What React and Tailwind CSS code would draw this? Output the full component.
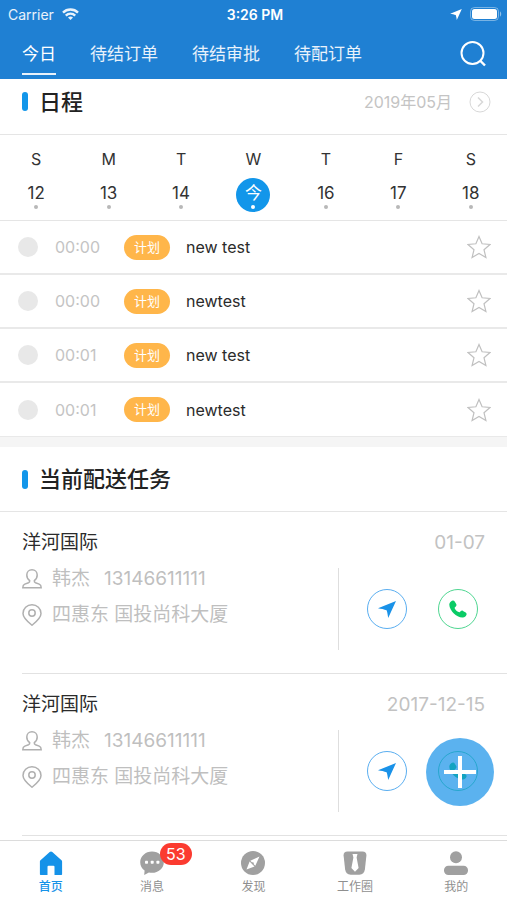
import { useState } from 'react';

const tabs = ['今日', '待结订单', '待结审批', '待配订单'];

const week = [
  { label: 'S', date: '12' },
  { label: 'M', date: '13' },
  { label: 'T', date: '14' },
  { label: 'W', date: '今', today: true },
  { label: 'T', date: '16' },
  { label: 'F', date: '17' },
  { label: 'S', date: '18' },
];

const schedules = [
  { id: 1, time: '00:00', tag: '计划', title: 'new test' },
  { id: 2, time: '00:00', tag: '计划', title: 'newtest' },
  { id: 3, time: '00:01', tag: '计划', title: 'new test' },
  { id: 4, time: '00:01', tag: '计划', title: 'newtest' },
];

const tasks = [
  { id: 1, company: '洋河国际', date: '01-07', contact: '韩杰', phone: '13146611111', address: '四惠东 国投尚科大厦' },
  { id: 2, company: '洋河国际', date: '2017-12-15', contact: '韩杰', phone: '13146611111', address: '四惠东 国投尚科大厦' },
];

const WifiIcon = () => (
  <svg className="h-3 w-[17px]" viewBox="0 0 17 12" fill="none" stroke="currentColor" strokeWidth="2.4">
    <path d="M1 4.6a10.6 10.6 0 0 1 15 0" />
    <path d="M3.8 7.6a6.6 6.6 0 0 1 9.4 0" />
    <path d="M8.5 12 6 9.6a3.6 3.6 0 0 1 5 0z" fill="currentColor" stroke="none" />
  </svg>
);

const BatteryIcon = () => (
  <svg className="h-[14px] w-8" viewBox="0 0 32 14" fill="none">
    <rect x="0.5" y="0.5" width="28" height="13" rx="4" stroke="white" strokeOpacity="0.4" />
    <rect x="2" y="2" width="25" height="10" rx="2.5" fill="white" />
    <path d="M30 4.5c1.6.6 1.6 4.4 0 5z" fill="white" fillOpacity="0.5" />
  </svg>
);

const ArrowIcon = ({ className }) => (
  <svg className={className} viewBox="0 0 18 17" fill="currentColor">
    <path d="M18 0 0 7.2c3 .5 6.300 1 8.600 2.100.9 2.200 1.100 4.900 1.600 7.700z" />
  </svg>
);

const PhoneIcon = () => (
  <svg className="size-[18px]" viewBox="0 0 18 18" fill="currentColor">
    <path d="M.6 3.200C1.200 1.700 2.600.5 4 .4c.7 0 1.300.4 1.700 1l1.500 2.500c.5.900.3 1.800-.4 2.500l-.8.8c-.4.400-.4.8-.2 1.200.9 1.600 2.200 2.900 3.900 3.700.5.200.9.100 1.200-.2l.7-.7c.7-.6 1.600-.8 2.400-.3l2.700 1.600c.9.6 1.100 1.500.7 2.400-.6 1.400-1.900 2.500-3.500 2.600-3.200.2-6.700-1.600-9.300-4.200C2.100 10.800-.6 6.300.6 3.200z" />
  </svg>
);

const SearchIcon = () => (
  <svg className="size-7" viewBox="0 0 28 28" fill="none" stroke="currentColor" strokeWidth="2">
    <circle cx="13.500" cy="13" r="11" />
    <path d="m21 20.500 5 5" strokeWidth="2.400" />
  </svg>
);

const ChevronCircleIcon = () => (
  <svg className="size-[22px]" viewBox="0 0 22 22" fill="none" stroke="currentColor">
    <circle cx="11" cy="11" r="10" />
    <path d="m9 6.500 4.500 4.500L9 15.500" strokeWidth="1.500" />
  </svg>
);

const StarIcon = () => (
  <svg className="size-6" viewBox="0 0 24 24" fill="none" stroke="currentColor" strokeWidth="1.200">
    <path d="m12 1.500 3.100 7.300 7.900.7-6 5.200 1.900 7.800L12 18.400l-6.900 4.100L7 14.700 1 9.500l7.900-.7z" />
  </svg>
);

const PersonIcon = () => (
  <svg className="h-5 w-5 shrink-0" viewBox="0 0 20 20" fill="none" stroke="currentColor" strokeWidth="1.500">
    <path d="M7.700 11.700C5.900 10.400 4.800 8.300 4.800 6c0-3 2.200-5.200 5.200-5.200S15.200 3 15.200 6c0 2.300-1.100 4.400-2.900 5.700-.2 1.100.2 1.700 1.200 2.100l3.700 1.300c1.300.5 2 1.500 2 3.600H.8c0-2.100.7-3.100 2-3.600l3.700-1.300c1-.4 1.400-1 1.200-2.100z" />
  </svg>
);

const PinIcon = () => (
  <svg className="h-[22px] w-5 shrink-0" viewBox="0 0 20 22" fill="none" stroke="currentColor" strokeWidth="1.500">
    <path d="M10 21.200C6.500 18.300 1 14.200 1 9.500 1 4.500 5 .8 10 .8s9 3.700 9 8.700c0 4.700-5.500 8.800-9 11.700z" />
    <circle cx="10" cy="9" r="3.200" />
  </svg>
);

const HomeIcon = () => (
  <svg className="size-6" viewBox="0 0 24 24" fill="currentColor">
    <path d="M12 .5c.5 0 .9.200 1.300.5l9.200 8.200c.4.400.6.800.6 1.300V23c0 .6-.4 1-1 1h-6.600v-8.200a1 1 0 0 0-1-1h-5a1 1 0 0 0-1 1V24H1.900c-.6 0-1-.4-1-1V10.500c0-.5.200-.9.600-1.300L10.700 1c.4-.3.800-.5 1.300-.5z" />
  </svg>
);

const ChatIcon = () => (
  <svg className="size-6" viewBox="0 0 24 24" fill="currentColor">
    <path d="M12 .5C5.500.500.200 5.300.200 11.200c0 3.500 1.700 6.300 4.400 8.300L4.200 24l4.700-2.600c1 .3 2 .4 3.100.4 6.500 0 11.800-4.700 11.800-10.600S18.500.5 12 .5z" />
    <g fill="white">
      <rect x="5" y="9.700" width="3" height="3" rx="0.700" />
      <rect x="10.700" y="9.700" width="3" height="3" rx="0.700" />
      <rect x="16.400" y="9.700" width="3" height="3" rx="0.700" />
    </g>
  </svg>
);

const CompassIcon = () => (
  <svg className="size-6" viewBox="0 0 24 24">
    <circle cx="12" cy="12" r="12" fill="currentColor" />
    <path d="M18.500 5.500 9.300 9.800l5 5zM8.600 10.500 5.500 18.500l8-3.100z" fill="white" />
    <circle cx="11.800" cy="12.300" r="1" fill="currentColor" />
  </svg>
);

const TieIcon = () => (
  <svg className="size-6" viewBox="0 0 24 24">
    <path d="M4.500.5h15C22 .5 23.600 2 23.400 4.500l-1.500 13.800c-.5 3.600-2.200 5.400-5.600 5.400H7.700c-3.400 0-5.100-1.800-5.600-5.400L.6 4.500C.4 2 2 .5 4.500.5z" fill="currentColor" />
    <path d="M9.500 3h5l-.9 3.500 2 10.500L12 20.800 8.400 17l2-10.500z" fill="white" />
  </svg>
);

const MineIcon = () => (
  <svg className="size-6" viewBox="0 0 24 24" fill="currentColor">
    <circle cx="12" cy="6.300" r="6" />
    <rect x="0" y="14.700" width="24" height="9.300" rx="4.400" />
  </svg>
);

const navItems = [
  { label: '首页', icon: HomeIcon },
  { label: '消息', icon: ChatIcon, badge: 53 },
  { label: '发现', icon: CompassIcon },
  { label: '工作圈', icon: TieIcon },
  { label: '我的', icon: MineIcon },
];

const SectionTitle = ({ children }) => (
  <h2 className="flex items-center gap-[11px] text-[22px] leading-8 font-medium text-[#222]">
    <span className="h-[19px] w-[6px] rounded-full bg-[#1296ea]" />
    {children}
  </h2>
);

const TaskCard = ({ task }) => (
  <li className="ml-[22px] border-b border-[#e2e2e2] pt-[17px] pr-[22px] pb-[23px]">
    <div className="flex items-center justify-between text-[19px] leading-7">
      <h3 className="text-[#2b2b2b]">{task.company}</h3>
      <time className="text-[#c2c2c2]">{task.date}</time>
    </div>
    <div className="mt-2 flex items-start justify-between text-[#b0b0b0]">
      <div className="flex flex-col gap-2 text-[19px] leading-7">
        <p className="flex items-center gap-[10px]">
          <PersonIcon />
          <span className="text-[#bfbfbf]">{task.contact}</span>
          <span className="ml-1 text-[#bfbfbf]">{task.phone}</span>
        </p>
        <p className="flex items-center gap-[10px]">
          <PinIcon />
          <span className="text-[#bfbfbf]">{task.address}</span>
        </p>
      </div>
      <div className="mt-[3px] flex h-[82px] w-[147px] shrink-0 items-center gap-[31px] border-l border-[#dedede] pl-7">
        <button aria-label="导航" className="flex size-10 items-center justify-center rounded-full border border-[#5aaef0] text-[#1a92e8]">
          <ArrowIcon className="h-[17px] w-[18px]" />
        </button>
        <button aria-label="电话" className="flex size-10 items-center justify-center rounded-full border border-[#4fd691] text-[#0acb66]">
          <PhoneIcon />
        </button>
      </div>
    </div>
  </li>
);

const App = () => {
  const [activeTab, setActiveTab] = useState('今日');

  return (
    <div className="min-h-screen bg-white pb-[60px] font-[Inter,'Noto_Sans_CJK_SC',sans-serif]">
      <header className="sticky top-0 z-10 bg-[#1f80d3] text-white">
        {/* Status bar */}
        <div className="grid h-7 grid-cols-3 items-center pr-[5px] pl-2 text-[14px]">
          <div className="flex items-center gap-2 text-white/90">
            Carrier
            <WifiIcon />
          </div>
          <span className="text-center font-semibold">3:26 PM</span>
          <div className="flex items-center justify-end gap-2">
            <ArrowIcon className="h-[11px] w-3" />
            <BatteryIcon />
          </div>
        </div>

        {/* Tabs */}
        <div className="flex h-[51px] items-center justify-between pr-5 pl-[22px]">
          <nav className="flex gap-[34px] self-stretch">
            {tabs.map((tab) => (
              <button
                key={tab}
                onClick={() => setActiveTab(tab)}
                className={`mb-1 flex items-center border-b-2 pt-2 text-[17px] whitespace-nowrap ${
                  tab === activeTab ? 'border-white/90 text-white' : 'border-transparent text-white/90'
                }`}
              >
                {tab}
              </button>
            ))}
          </nav>
          <button aria-label="搜索">
            <SearchIcon />
          </button>
        </div>
      </header>

      <main>
        {/* Schedule */}
        <section>
          <div className="flex h-14 items-center justify-between border-b border-[#e5e5e5] pr-4 pb-[10px] pl-[22px]">
            <SectionTitle>日程</SectionTitle>
            <div className="flex items-center gap-[17px] text-[16px] text-[#c4c4c4]">
              <span>2019年05月</span>
              <button aria-label="查看日历" className="text-[#d8d8d8]">
                <ChevronCircleIcon />
              </button>
            </div>
          </div>

          <div className="grid grid-cols-7 border-b border-[#e5e5e5] pt-3 pb-2 text-[17px] text-[#333]">
            {week.map((day) => (
              <div key={day.date} className="flex flex-col items-center gap-[7px]">
                <span className="text-[16px] leading-6">{day.label}</span>
                <button
                  className={`flex size-[34px] flex-col items-center rounded-full pt-[3px] leading-6 ${
                    day.today ? 'bg-[#1296ea] text-white' : ''
                  }`}
                >
                  {day.date}
                  <span className={`size-1 rounded-full ${day.today ? 'bg-white' : 'bg-[#b8b8b8]'}`} />
                </button>
              </div>
            ))}
          </div>

          <ul>
            {schedules.map((item) => (
              <li
                key={item.id}
                className="flex h-[54px] items-center border-b-2 border-[#e9e9e9] pr-4 pl-[18px] last:border-b"
              >
                <input
                  type="checkbox"
                  id={`schedule-${item.id}`}
                  className="size-5 appearance-none rounded-full bg-[#e8e8e8] checked:bg-[#1296ea]"
                />
                <label htmlFor={`schedule-${item.id}`} className="flex flex-1 items-center text-[16px]">
                  <span className="w-[86px] pl-[17px] text-[#c4c4c4]">{item.time}</span>
                  <span className="rounded-full bg-[#ffb64a] px-[10px] text-[13px] leading-[25px] text-white">
                    {item.tag}
                  </span>
                  <span className="pl-4 text-[#2b2b2b]">{item.title}</span>
                </label>
                <button aria-label="收藏" className="text-[#c0c0c0]">
                  <StarIcon />
                </button>
              </li>
            ))}
          </ul>
        </section>

        {/* Delivery tasks */}
        <section className="border-t-10 border-[#f5f5f5]">
          <div className="flex h-[65px] items-center border-b border-[#e5e5e5] pl-[22px]">
            <SectionTitle>当前配送任务</SectionTitle>
          </div>
          <ul>
            {tasks.map((task) => (
              <TaskCard key={task.id} task={task} />
            ))}
          </ul>
        </section>
      </main>

      <button
        aria-label="新建"
        className="fixed right-[13px] bottom-[94px] z-20 flex size-[68px] items-center justify-center rounded-full bg-[#1592e8]/70 text-white"
      >
        <svg className="size-8" viewBox="0 0 32 32" stroke="currentColor" strokeWidth="4">
          <path d="M16 0v32M0 16h32" />
        </svg>
      </button>

      {/* Bottom navigation */}
      <nav className="fixed inset-x-0 bottom-0 z-10 grid h-[60px] grid-cols-5 border-t border-[#dcdcdc] bg-white">
        {navItems.map(({ label, icon: Icon, badge }, index) => (
          <a
            key={label}
            href="#"
            className={`flex flex-col items-center gap-1 pt-[10px] text-[12px] leading-4 ${
              index === 0 ? 'font-medium text-[#1592e8]' : 'text-[#8f8f8f]'
            }`}
          >
            <span className={`relative ${index === 0 ? '' : 'text-[#a0a0a0]'}`}>
              <Icon />
              {badge && (
                <span className="absolute -top-2 left-5 rounded-full bg-[#fb3b30] px-[6px] text-[16px] leading-[22px] text-white">
                  {badge}
                </span>
              )}
            </span>
            {label}
          </a>
        ))}
      </nav>
    </div>
  );
};

export default App;
